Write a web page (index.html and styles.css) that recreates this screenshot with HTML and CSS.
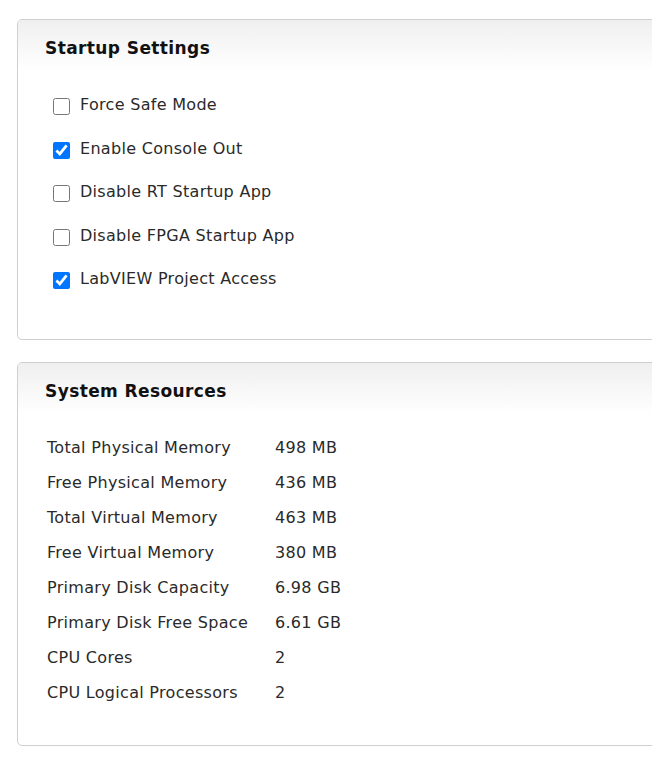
FILE: index.html
```html
<!DOCTYPE html>
<html>
<head>
<meta charset="utf-8">
<link rel="stylesheet" href="styles.css">
</head>
<body>
<div class="page">
  <section class="panel panel-startup">
    <div class="panel-head"><h2>Startup Settings</h2></div>
    <div class="panel-body">
      <label class="opt"><input type="checkbox"><span>Force Safe Mode</span></label>
      <label class="opt"><input type="checkbox" checked><span>Enable Console Out</span></label>
      <label class="opt"><input type="checkbox"><span>Disable RT Startup App</span></label>
      <label class="opt"><input type="checkbox"><span>Disable FPGA Startup App</span></label>
      <label class="opt"><input type="checkbox" checked><span>LabVIEW Project Access</span></label>
    </div>
  </section>
  <section class="panel panel-res">
    <div class="panel-head"><h2>System Resources</h2></div>
    <div class="panel-body">
      <div class="res"><span class="k">Total Physical Memory</span><span class="v">498 MB</span></div>
      <div class="res"><span class="k">Free Physical Memory</span><span class="v">436 MB</span></div>
      <div class="res"><span class="k">Total Virtual Memory</span><span class="v">463 MB</span></div>
      <div class="res"><span class="k">Free Virtual Memory</span><span class="v">380 MB</span></div>
      <div class="res"><span class="k">Primary Disk Capacity</span><span class="v">6.98 GB</span></div>
      <div class="res"><span class="k">Primary Disk Free Space</span><span class="v">6.61 GB</span></div>
      <div class="res"><span class="k">CPU Cores</span><span class="v">2</span></div>
      <div class="res"><span class="k">CPU Logical Processors</span><span class="v">2</span></div>
    </div>
  </section>
</div>
</body>
</html>
```
FILE: styles.css
```css
html, body { margin: 0; padding: 0; background: #fff; }
body {
  font-family: "DejaVu Sans", Verdana, sans-serif;
  color: #2a2a2a;
  overflow: hidden;
}
.page {
  padding: 19px 0 0 17px;
  width: 700px;
  display: flex;
  flex-direction: column;
  gap: 22px;
}
.panel {
  border: 1px solid #cfcfcf;
  border-radius: 5px;
  background: #fff;
  overflow: hidden;
}
.panel-head {
  height: 50px;
  background: linear-gradient(#efefef, #ffffff);
  padding: 0 0 0 27px;
  display: flex;
  align-items: center;
}
.panel-head h2 {
  margin: 0;
  font-size: 17px;
  letter-spacing: 0.4px;
  font-weight: bold;
  color: #111;
  position: relative;
  top: 3px;
}
.panel-startup { height: 319px; }
.panel-startup .panel-body {
  padding: 13px 0 0 35px;
  display: flex;
  flex-direction: column;
}
.opt {
  display: flex;
  align-items: center;
  height: 43.5px;
  font-size: 16px;
  letter-spacing: 0.3px;
}
.opt input {
  width: 17px;
  height: 17px;
  margin: 4px 10px 0 0;
  accent-color: #0075ff;
}
.panel-res { height: 382px; }
.panel-res .panel-body {
  padding: 17px 0 0 29px;
  display: flex;
  flex-direction: column;
}
.res {
  display: flex;
  align-items: center;
  height: 35px;
  font-size: 16px;
  letter-spacing: 0.3px;
}
.res .k { width: 228px; }
```
